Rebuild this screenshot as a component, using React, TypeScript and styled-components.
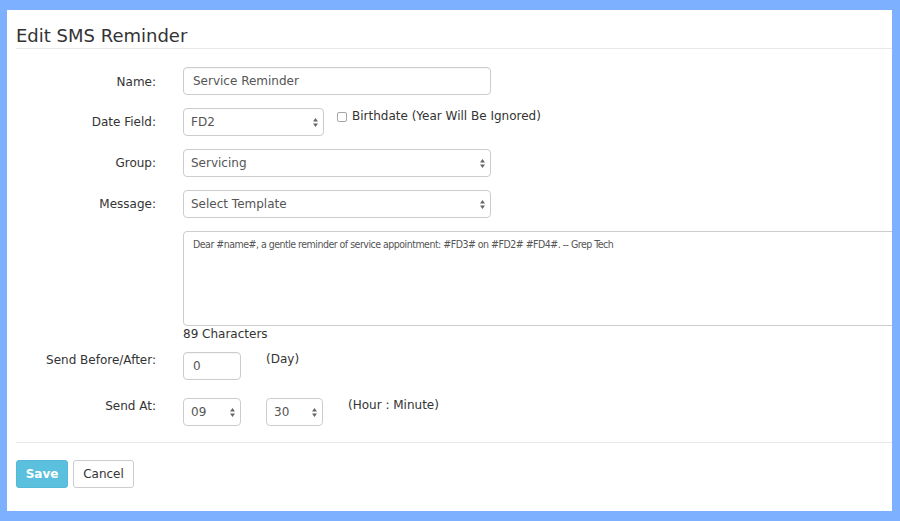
import React from "react";
import styled, { createGlobalStyle } from "styled-components";

const GlobalStyle = createGlobalStyle`
  html, body { margin: 0; padding: 0; }
  body {
    background: #7db1ff;
    font-family: "DejaVu Sans", Verdana, sans-serif;
    color: #333;
  }
`;

const Frame = styled.div`
  box-sizing: border-box;
  width: 900px;
  height: 521px;
  padding: 10px 8px 10px 7px;
`;

const Panel = styled.div`
  box-sizing: border-box;
  height: 100%;
  background: #fff;
  overflow: hidden;
  padding-left: 9px;
`;

const Header = styled.div`
  border-bottom: 1px solid #e8e8e8;
  padding: 15px 0 1px;
`;

const Title = styled.h4`
  margin: 0;
  font-size: 18px;
  line-height: 22px;
  font-weight: normal;
  color: #333;
`;

const Form = styled.div`
  padding-top: 18px;
`;

const Row = styled.div<{ $mb: number }>`
  display: grid;
  grid-template-columns: 140px 1fr;
  column-gap: 27px;
  margin-bottom: ${(p) => p.$mb}px;
`;

const Label = styled.div<{ $pad: number }>`
  text-align: right;
  font-size: 12px;
  line-height: 17px;
  padding-top: ${(p) => p.$pad}px;
  color: #333;
`;

const Controls = styled.div<{ $gap?: number }>`
  display: flex;
  align-items: flex-start;
  gap: ${(p) => p.$gap ?? 0}px;
`;

const TextInput = styled.div<{ $w: number }>`
  box-sizing: border-box;
  width: ${(p) => p.$w}px;
  height: 28px;
  border: 1px solid #ccc;
  border-radius: 4px;
  padding: 0 9px;
  display: flex;
  align-items: center;
  font-size: 12px;
  color: #555;
  box-shadow: inset 0 1px 1px rgba(0, 0, 0, 0.04);
`;

const Select = styled.div<{ $w: number }>`
  box-sizing: border-box;
  width: ${(p) => p.$w}px;
  height: 28px;
  border: 1px solid #ccc;
  border-radius: 4px;
  padding: 0 5px 0 7px;
  display: flex;
  align-items: center;
  justify-content: space-between;
  font-size: 12px;
  color: #555;
`;

const Note = styled.div<{ $mt?: number }>`
  font-size: 12px;
  line-height: 17px;
  margin-top: ${(p) => p.$mt ?? 0}px;
  color: #333;
`;

const CheckLabel = styled.label`
  display: flex;
  align-items: center;
  gap: 5px;
  font-size: 12px;
  line-height: 17px;
  color: #333;
`;

const Box = styled.span`
  box-sizing: border-box;
  width: 10px;
  height: 10px;
  border: 1px solid #a6a6a6;
  border-radius: 2px;
  background: #fff;
`;

const TextArea = styled.div`
  box-sizing: border-box;
  width: 760px;
  height: 95px;
  border: 1px solid #ccc;
  border-radius: 4px;
  padding: 4px 9px;
  font-family: "DejaVu Sans Condensed", "DejaVu Sans", sans-serif;
  font-stretch: condensed;
  font-size: 10.5px;
  letter-spacing: -0.5px;
  line-height: 16px;
  color: #555;
  white-space: nowrap;
`;

const Counter = styled.div`
  font-size: 12px;
  line-height: 17px;
  color: #333;
  margin-bottom: 9px;
`;

const Footer = styled.div`
  border-top: 1px solid #e8e8e8;
  padding-top: 17px;
  display: flex;
  gap: 5px;
`;

const Button = styled.button<{ $primary?: boolean; $w: number }>`
  box-sizing: border-box;
  width: ${(p) => p.$w}px;
  height: 28px;
  border-radius: 3px;
  font-family: "DejaVu Sans", Verdana, sans-serif;
  font-size: 12px;
  padding: 0;
  cursor: pointer;
  font-weight: ${(p) => (p.$primary ? "bold" : "normal")};
  color: ${(p) => (p.$primary ? "#fff" : "#333")};
  background: ${(p) => (p.$primary ? "#5bc0de" : "#fff")};
  border: 1px solid ${(p) => (p.$primary ? "#53b9d8" : "#ccc")};
`;

const Arrows = () => (
  <svg width="5" height="9" viewBox="0 0 5 9" aria-hidden="true">
    <path d="M0 3.6 L2.5 0 L5 3.6Z" fill="#666" />
    <path d="M0 5.4 L2.5 9 L5 5.4Z" fill="#666" />
  </svg>
);

const Dropdown = ({ w, children }: { w: number; children: React.ReactNode }) => (
  <Select $w={w}>
    <span>{children}</span>
    <Arrows />
  </Select>
);

export default function App() {
  return (
    <>
      <GlobalStyle />
      <Frame>
        <Panel>
          <Header>
            <Title>Edit SMS Reminder</Title>
          </Header>
          <Form>
            <Row $mb={13}>
              <Label $pad={7}>Name:</Label>
              <Controls>
                <TextInput $w={308}>Service Reminder</TextInput>
              </Controls>
            </Row>
            <Row $mb={13}>
              <Label $pad={6}>Date Field:</Label>
              <Controls $gap={13}>
                <Dropdown w={141}>FD2</Dropdown>
                <CheckLabel>
                  <Box />
                  Birthdate (Year Will Be Ignored)
                </CheckLabel>
              </Controls>
            </Row>
            <Row $mb={13}>
              <Label $pad={6}>Group:</Label>
              <Controls>
                <Dropdown w={308}>Servicing</Dropdown>
              </Controls>
            </Row>
            <Row $mb={13}>
              <Label $pad={6}>Message:</Label>
              <Controls>
                <Dropdown w={308}>Select Template</Dropdown>
              </Controls>
            </Row>
            <Row $mb={0}>
              <span />
              <div>
                <TextArea>
                  Dear #name#, a gentle reminder of service appointment: #FD3# on #FD2# #FD4#. -- Grep Tech
                </TextArea>
                <Counter>89 Characters</Counter>
              </div>
            </Row>
            <Row $mb={18}>
              <Label $pad={-1}>Send Before/After:</Label>
              <Controls $gap={25}>
                <TextInput $w={58}>0</TextInput>
                <Note $mt={-1}>(Day)</Note>
              </Controls>
            </Row>
            <Row $mb={16}>
              <Label $pad={-1}>Send At:</Label>
              <Controls $gap={25}>
                <Dropdown w={58}>09</Dropdown>
                <Dropdown w={57}>30</Dropdown>
                <Note $mt={-1}>(Hour : Minute)</Note>
              </Controls>
            </Row>
          </Form>
          <Footer>
            <Button $primary $w={52}>Save</Button>
            <Button $w={61}>Cancel</Button>
          </Footer>
        </Panel>
      </Frame>
    </>
  );
}
